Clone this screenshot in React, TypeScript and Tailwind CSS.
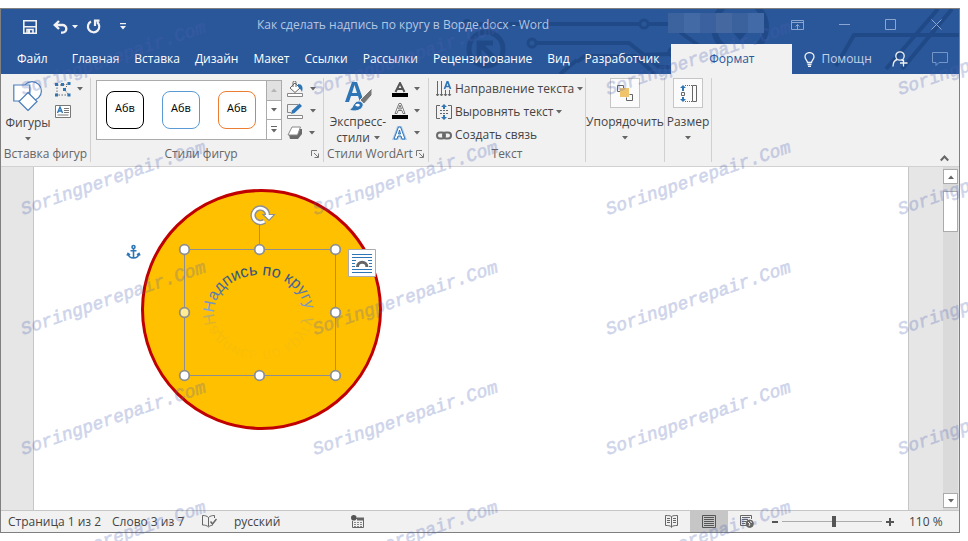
import { ReactNode, useState } from 'react';
import clsx from 'clsx';

const tabs = [
    'Главная',
    'Вставка',
    'Дизайн',
    'Макет',
    'Ссылки',
    'Рассылки',
    'Рецензирование',
    'Вид',
    'Разработчик',
];

const swatches = [
    { name: 'black', className: 'border-black' },
    { name: 'blue', className: 'border-[#5b9bd5]' },
    { name: 'orange', className: 'border-[#ed7d31]' },
];

const handles = [
    [184, 249],
    [259, 249],
    [335, 249],
    [335, 312],
    [335, 375],
    [259, 375],
    [184, 375],
];

const watermarks = [23, 315, 608, 900].flatMap((x) => [95, 215, 335, 455, 575].map((y) => ({ x, y })));

function Caret({ className = 'text-[#666]' }: { className?: string }) {
    return (
        <svg width="6" height="4" viewBox="0 0 6 4" className={clsx('shrink-0', className)} aria-hidden>
            <path d="M0 0h6L3 3.5z" fill="currentColor" />
        </svg>
    );
}

function Group({
    label,
    launcher,
    className,
    children,
}: {
    label?: string;
    launcher?: boolean;
    className: string;
    children: ReactNode;
}) {
    return (
        <section
            className={clsx('my-1 flex shrink-0 flex-col border-r border-[#d2d0d0]', className)}
            aria-label={label}
        >
            <div className="flex h-[72px]">{children}</div>
            {label && (
                <div className="flex h-4 items-center text-[#666]">
                    <span className="flex-1 whitespace-nowrap text-center leading-4">{label}</span>
                    {launcher && (
                        <button type="button" className="mr-1 shrink-0" aria-label="Параметры">
                            <svg width="8" height="8" viewBox="0 0 8 8" fill="none" stroke="#777">
                                <path d="M.5 6V.5H6M3 3l4 4M7.5 3.5v4h-4" />
                            </svg>
                        </button>
                    )}
                </div>
            )}
        </section>
    );
}

function IconButton({ label, children }: { label: string; children: ReactNode }) {
    return (
        <button type="button" aria-label={label} className="flex h-[22px] items-center gap-1.5">
            {children}
        </button>
    );
}

function Circuit() {
    return (
        <svg
            width="529"
            height="65"
            viewBox="430 9 529 65"
            className="pointer-events-none absolute top-0 right-0"
            fill="none"
            stroke="#204a87"
            strokeWidth="4"
            aria-hidden
        >
            <circle cx="467" cy="24" r="3.5" strokeWidth="3" />
            <path d="M471 24h169M536 43h93l30 24h15M577 62l8-6h50l20 18M560 74l17-14" />
            <circle cx="644" cy="24" r="4" strokeWidth="3" />
            <circle cx="532" cy="43" r="4" strokeWidth="3" />
            <path d="M648 24h40M680 32l22 16M640 55l30-1" />
            <circle cx="673" cy="52" r="4" strokeWidth="3" />
            <circle cx="486" cy="49" r="17" strokeWidth="5" />
            <path d="M479 57V43h14M480 44l14 14" strokeWidth="5" />
            <circle cx="740" cy="27" r="26" strokeWidth="6" />
            <path d="M728 22l12 14 14-18" strokeWidth="6" />
            <path d="M836 66l18-31h105M938 9l-52 60M952 9l-50 60" />
        </svg>
    );
}

function TitleBar() {
    return (
        <header className="relative flex h-[35px] text-[#b3c6e3]">
            <div className="flex w-64 shrink-0 items-center pl-[22px] text-[#f2f2f2]">
                <button type="button" aria-label="Сохранить">
                    <svg width="14" height="14" viewBox="0 0 14 14" fill="none" stroke="currentColor" strokeWidth="1.6">
                        <path d="M.8.8h12.4v12.4H.8zM1 6.8h12" />
                        <path d="M4 13V9.500h6V13" />
                        <path d="M5 9.500h2V13H5z" fill="currentColor" stroke="none" />
                    </svg>
                </button>
                <button type="button" aria-label="Отменить" className="ml-4">
                    <svg width="15" height="14" viewBox="0 0 15 14" fill="none" stroke="currentColor" strokeWidth="2.4">
                        <path d="M6 1L1.800 5 6 9M2.500 5h7a3.800 3.800 0 0 1 0 7.600H8" />
                    </svg>
                </button>
                <button type="button" aria-label="Список отмены" className="ml-1">
                    <Caret className="text-[#f2f2f2]" />
                </button>
                <button type="button" aria-label="Повторить" className="ml-2">
                    <svg width="16" height="15" viewBox="0 0 16 15" fill="none" stroke="currentColor" strokeWidth="2.200">
                        <path d="M5 2.500A5.700 5.700 0 1 0 11 3M13.500 1.600H9V7" />
                    </svg>
                </button>
                <button type="button" aria-label="Настройка панели" className="ml-[18px]">
                    <svg width="6" height="7" viewBox="0 0 6 7" fill="currentColor">
                        <path d="M0 0h6v1.200H0zM0 3h6L3 6.500z" />
                    </svg>
                </button>
            </div>
            <h1 className="flex-1 self-center whitespace-nowrap pb-1 leading-4">
                Как сделать надпись по кругу в Ворде.docx - Word
            </h1>
            <div className="mr-[27px] mb-2 flex h-5 w-24 shrink-0 self-center overflow-hidden" aria-hidden>
                <span className="flex-1 bg-[#3d639f]" />
                <span className="flex-1 bg-[#446aa6]" />
                <span className="flex-1 bg-[#3b629e]" />
                <span className="flex-1 bg-[#4568a0]" />
                <span className="flex-1 bg-[#3c629e]" />
                <span className="flex-1 bg-[#426aa7]" />
            </div>
            <div className="flex shrink-0 items-center gap-[35px] pr-[17px] pb-1 text-[#8aa6d0]">
                <button type="button" aria-label="Параметры отображения ленты">
                    <svg width="13" height="10" viewBox="0 0 13 10" fill="none" stroke="currentColor">
                        <path d="M.5.5h12v9H.5zM.5 2.500h12M6.500 9V4.500M4.500 6.500l2-2 2 2" />
                    </svg>
                </button>
                <button type="button" aria-label="Свернуть">
                    <svg width="11" height="11" viewBox="0 0 11 11" stroke="currentColor">
                        <path d="M0 5.500h11" />
                    </svg>
                </button>
                <button type="button" aria-label="Развернуть">
                    <svg width="11" height="11" viewBox="0 0 11 11" fill="none" stroke="currentColor">
                        <path d="M.5.5h10v10H.5z" />
                    </svg>
                </button>
                <button type="button" aria-label="Закрыть">
                    <svg width="11" height="11" viewBox="0 0 11 11" stroke="currentColor">
                        <path d="M.5.5l10 10M10.500.5l-10 10" />
                    </svg>
                </button>
            </div>
        </header>
    );
}

function TabBar() {
    return (
        <nav className="relative flex h-[30px] items-center whitespace-nowrap text-white">
            <button type="button" className="ml-4 mr-6">
                Файл
            </button>
            <div className="flex gap-[15px]">
                {tabs.map((tab) => (
                    <button type="button" key={tab}>
                        {tab}
                    </button>
                ))}
            </div>
            <div className="flex flex-1 items-center self-stretch">
                <button type="button" className="ml-3 h-full w-[121px] bg-[#f1f1f1] text-[#2a579a]">
                    Формат
                </button>
                <button type="button" className="ml-3 flex items-center gap-1.5 text-[#c3d1e8]">
                    <svg width="11" height="15" viewBox="0 0 11 15" fill="none" stroke="#f2f2f2" strokeWidth="1.300">
                        <path d="M3.500 10.500C3.500 8.500 1 7.500 1 4.800a4.500 4.200 0 0 1 9 0c0 2.700-2.500 3.700-2.500 5.700zM3.500 12.500h4M4 14.300h3" />
                    </svg>
                    Помощн
                </button>
            </div>
            <button type="button" aria-label="Общий доступ" className="mr-6">
                <svg width="16" height="16" viewBox="0 0 16 16" fill="none" stroke="#f2f2f2" strokeWidth="1.300">
                    <circle cx="8" cy="5" r="4.200" />
                    <path d="M1 15.500C1 11.500 3 9 5.500 8.500M9.500 8.800l1.500 1M11.500 8.500v7M8 12h7.500" />
                </svg>
            </button>
            <button type="button" aria-label="Примечания" className="mr-[11px]">
                <svg width="16" height="14" viewBox="0 0 16 14" fill="none" stroke="#7395c8">
                    <path d="M.5.5h15v10H7l-3 3v-3H.5z" />
                </svg>
            </button>
        </nav>
    );
}

function ShapesGroup() {
    return (
        <Group label="Вставка фигур" className="w-[90px]">
            <button type="button" className="flex w-[54px] flex-col items-center pt-[3px]">
                <svg width="30" height="30" viewBox="0 0 30 30" fill="#fff" stroke="#4a7ebb" strokeWidth="1.200">
                    <circle cx="19" cy="10" r="9.400" />
                    <path d="M.8 4h16v16H.8z" />
                    <path d="M15 11.500l9 9-9 9-9-9z" />
                </svg>
                <span className="mt-1 leading-4">Фигуры</span>
                <Caret className="mt-1.5 text-[#666]" />
            </button>
            <div className="flex flex-col">
                <IconButton label="Изменить фигуру">
                    <svg width="16" height="15" viewBox="0 0 16 15" fill="none">
                        <path d="M2 3h5l7-1-5 5 5 6H2z" stroke="#666" strokeDasharray="1.500 1.500" />
                        <path d="M0 1h3v3H0zM6 1h3v3H6zM12.500 0h3v3h-3zM8 6h3v3H8zM0 11.500h3v3H0zM12.500 11.500h3v3h-3z" fill="#2e75b6" />
                    </svg>
                    <Caret />
                </IconButton>
                <IconButton label="Надпись">
                    <svg width="16" height="13" viewBox="0 0 16 13" fill="none">
                        <path d="M.5.5h15v12H.5z" fill="#fff" stroke="#777" />
                        <path d="M9 3.500h5M9 5.500h5M9 7.500h5M2.500 10h11" stroke="#777" />
                        <path d="M2.500 8L5 2l2.500 6M3.500 6h3" stroke="#2e75b6" strokeWidth="1.400" />
                    </svg>
                </IconButton>
            </div>
        </Group>
    );
}

function StylesGroup() {
    const [selected, setSelected] = useState('');

    return (
        <Group label="Стили фигур" launcher className="w-[233px]">
            <div className="mt-0.5 ml-[5px] flex h-[60px] w-[186px] border border-[#ababab] bg-white">
                <div className="flex flex-1 items-center gap-[18px] pl-[9px]">
                    {swatches.map(({ name, className }) => (
                        <button
                            type="button"
                            key={name}
                            aria-pressed={selected === name}
                            onClick={() => setSelected(name)}
                            className={clsx(
                                'size-[38px] rounded-lg border pb-1 text-[11px] text-black',
                                className,
                            )}
                        >
                            Абв
                        </button>
                    ))}
                </div>
                <div className="flex w-[15px] flex-col divide-y divide-[#ababab] border-l border-[#ababab]">
                    <button type="button" aria-label="Вверх" className="grid flex-1 place-items-center bg-[#e1e1e1]">
                        <Caret className="rotate-180 text-[#b5b5b5]" />
                    </button>
                    <button type="button" aria-label="Вниз" className="grid flex-1 place-items-center">
                        <Caret />
                    </button>
                    <button
                        type="button"
                        aria-label="Дополнительно"
                        className="flex flex-1 flex-col items-center justify-center gap-0.5"
                    >
                        <span className="h-px w-1.5 bg-[#666]" />
                        <Caret />
                    </button>
                </div>
            </div>
            <div className="ml-[5px] flex flex-col">
                <IconButton label="Заливка фигуры">
                    <svg width="17" height="16" viewBox="0 0 17 16" fill="none">
                        <path d="M.5 12.500h15v3H.5z" fill="#fff" stroke="#888" />
                        <path d="M8 2l5 5-5 4.500L3 7z" fill="#fff" stroke="#666" />
                        <path d="M6 6V1.500a1.500 1.500 0 0 1 3 0V6" stroke="#666" />
                        <path d="M11 3c4 0 5.500 3 4 8-1-2-2-4-4-5z" fill="#2e75b6" />
                    </svg>
                    <Caret />
                </IconButton>
                <IconButton label="Контур фигуры">
                    <svg width="17" height="16" viewBox="0 0 17 16" fill="none">
                        <path d="M.5 12.500h15v3H.5z" fill="#fff" stroke="#888" />
                        <path d="M11 1.500H.5v8H4" stroke="#888" />
                        <path d="M4 11l1-3.500L12.500.5l2.500 2.500L7.500 10z" fill="#2e75b6" />
                    </svg>
                    <Caret />
                </IconButton>
                <IconButton label="Эффекты фигуры">
                    <svg width="16" height="14" viewBox="0 0 16 14">
                        <path d="M6 3h9v5l-4 5H3L2 9z" fill="#6a6a6a" />
                        <path d="M5 1h8.500l-3 8H1z" fill="#fff" stroke="#888" strokeLinejoin="round" />
                    </svg>
                    <Caret />
                </IconButton>
            </div>
        </Group>
    );
}

function WordArtGroup() {
    return (
        <Group label="Стили WordArt" launcher className="w-[105px]">
            <button type="button" className="flex w-[68px] flex-col items-center pt-0.5 leading-4">
                <svg width="30" height="32" viewBox="0 0 30 32" className="shrink-0">
                    <path d="M2 22L9 2h5l7 20h-4l-2-6H8l-2 6zM9 13h5l-2.500-8z" fill="#2e75b6" fillRule="evenodd" />
                    <path d="M29 8v7l-8 9-4-4z" fill="#777" stroke="#f1f1f1" />
                    <path d="M6 30c4-1 4-8 9-9 3 0 6 2 5 5-2 5-9 6-14 4z" fill="#2e75b6" stroke="#f1f1f1" />
                    <path d="M12 25c2-2 4-1 5 0-1 2-3 2-5 0z" fill="#fff" />
                </svg>
                <span className="mt-0.5">Экспресс-</span>
                <span className="flex items-center gap-1">
                    стили
                    <Caret />
                </span>
            </button>
            <div className="flex flex-col">
                <IconButton label="Заливка текста">
                    <svg width="16" height="15" viewBox="0 0 16 15">
                        <path d="M3.500 10L8 1l4.500 9M5.500 7h5" fill="none" stroke="#555" strokeWidth="2" />
                        <path d="M0 11h16v4H0z" />
                    </svg>
                    <Caret />
                </IconButton>
                <IconButton label="Контур текста">
                    <svg width="16" height="16" viewBox="0 0 16 16">
                        <path d="M3 10.500L7 .5h2l4 10h-2l-1-3H6l-1 3zM6.500 6h3L8 2z" fill="#fff" stroke="#777" />
                        <path d="M0 12h16v4H0z" />
                    </svg>
                    <Caret />
                </IconButton>
                <IconButton label="Текстовые эффекты">
                    <svg width="16" height="14" viewBox="0 0 16 14">
                        <path d="M2 13L6.500 1h2L13 13h-3l-1-3H6l-1 3zM6.500 8h2l-1-4z" fill="#fff" stroke="#a6c8ea" strokeWidth="3" />
                        <path d="M2 13L6.500 1h2L13 13h-3l-1-3H6l-1 3zM6.500 8h2l-1-4z" fill="#fff" stroke="#2e75b6" />
                    </svg>
                    <Caret />
                </IconButton>
            </div>
        </Group>
    );
}

function TextGroup() {
    return (
        <Group label="Текст" className="w-[157px]">
            <div className="ml-[7px] flex flex-col whitespace-nowrap">
                <button type="button" className="flex h-[22px] items-center gap-[3px]">
                    <svg width="16" height="16" viewBox="0 0 16 16" fill="none">
                        <path d="M1.500 0v15M5.500 0v15M9.500 9v6M13.500 9v6" stroke="#666" />
                        <path d="M0 13l1.500 2L3 13M4 13l1.500 2L7 13M8 13l1.500 2 1.500-2M12 13l1.500 2 1.500-2" stroke="#666" />
                        <path d="M8.500 8L11.500 0l3 8M9.500 5.500h4" stroke="#2e75b6" strokeWidth="1.700" />
                    </svg>
                    Направление текста
                    <Caret />
                </button>
                <button type="button" className="flex h-[24px] items-center gap-[3px]">
                    <svg width="16" height="16" viewBox="0 0 16 16" fill="none">
                        <path d="M4 1.500H.5v13H4M12 1.500h3.500v13H12" stroke="#666" />
                        <path d="M4 6.500h8M4 9.500h8" stroke="#666" strokeDasharray="2 1" />
                        <path d="M8 0l3 3H9v2H7V3H5zM8 16l-3-3h2v-2h2v2h2z" fill="#2e75b6" />
                    </svg>
                    Выровнять текст
                    <Caret />
                </button>
                <button type="button" className="flex h-[22px] items-center gap-[3px]">
                    <svg width="16" height="9" viewBox="0 0 16 9" fill="none" stroke="#6a6a6a" strokeWidth="2">
                        <rect x="1" y="1.500" width="8" height="6" rx="3" />
                        <rect x="7" y="1.500" width="8" height="6" rx="3" />
                    </svg>
                    Создать связь
                </button>
            </div>
        </Group>
    );
}

function CollapsedGroup({ label, className, children }: { label: string; className: string; children: ReactNode }) {
    return (
        <Group className={className}>
            <button type="button" className="flex w-full flex-col items-center">
                <span className="grid size-[30px] place-items-center border border-[#c6c6c6] bg-[#fbfbfb]">
                    {children}
                </span>
                <span className="mt-1 leading-5">{label}</span>
                <Caret className="mt-1 text-[#666]" />
            </button>
        </Group>
    );
}

function Ribbon() {
    return (
        <div className="flex h-[93px] border-b border-[#d2d0d0] bg-[#f1f1f1]">
            <ShapesGroup />
            <StylesGroup />
            <WordArtGroup />
            <TextGroup />
            <CollapsedGroup label="Упорядочить" className="w-[79px]">
                <svg width="16" height="16" viewBox="0 0 16 16" fill="none">
                    <path d="M3.500 6.500h-3v-6h6v3M12.500 9.500h3v6h-6v-3" stroke="#666" />
                    <path d="M3 3h9v9H3z" fill="#f0c36d" />
                </svg>
            </CollapsedGroup>
            <CollapsedGroup label="Размер" className="w-[47px]">
                <svg width="17" height="17" viewBox="0 0 17 17" fill="none">
                    <path d="M12.500.5h4v16h-4zM1.500 7.500h3v3h-3z" stroke="#666" />
                    <path d="M5 .5h7M5 16.500h7" stroke="#666" strokeDasharray="1 1" />
                    <path d="M3 0l3 3H4v3H2V3H0zM3 17l-3-3h2v-2h2v2h2z" fill="#2e75b6" />
                </svg>
            </CollapsedGroup>
            <button type="button" aria-label="Свернуть ленту" className="mr-2.5 mb-1 ml-auto self-end">
                <svg width="9" height="7" viewBox="0 0 9 7" fill="none" stroke="#666" strokeWidth="2">
                    <path d="M.8 5.500l3.700-4 3.700 4" />
                </svg>
            </button>
        </div>
    );
}

function Drawing() {
    return (
        <svg
            width="360"
            height="273"
            viewBox="34 167 360 273"
            className="block"
            fontFamily="'Liberation Sans', sans-serif"
            fontSize="16"
        >
            <defs>
                <path id="arc" d="M214 313A45.500 38 0 0 1 305 313V330" />
                <linearGradient id="ink" gradientUnits="userSpaceOnUse" x1="0" y1="262" x2="0" y2="314">
                    <stop offset="0" stopColor="#1f4068" />
                    <stop offset=".45" stopColor="#44679a" />
                    <stop offset="1" stopColor="#8fb0dc" />
                </linearGradient>
                <linearGradient id="fade" gradientUnits="userSpaceOnUse" x1="0" y1="314" x2="0" y2="262">
                    <stop offset="0" stopColor="#8fa6b0" stopOpacity=".85" />
                    <stop offset=".3" stopColor="#a89a60" stopOpacity=".12" />
                    <stop offset="1" stopColor="#a89a60" stopOpacity=".03" />
                </linearGradient>
            </defs>

            <circle cx="261.500" cy="309.500" r="119" fill="#ffc000" stroke="#c00000" strokeWidth="3" />

            <text fill="url(#ink)">
                <textPath href="#arc">Надпись по кругу</textPath>
            </text>
            <text fill="url(#fade)" transform="matrix(1 0 0 -1 0 626)" aria-hidden>
                <textPath href="#arc">Надпись по кругу</textPath>
            </text>

            <path d="M184.500 249.500h151v126h-151zM259.500 222v27" fill="none" stroke="#8f8f8f" />
            {handles.map(([x, y]) => (
                <circle key={`${x}-${y}`} cx={x + 0.5} cy={y + 0.5} r="4.800" fill="#fff" stroke="#8f8f8f" strokeWidth="1.800" />
            ))}
            <circle cx="184.500" cy="312.500" r="4.800" fill="#ffec94" stroke="#8f8f8f" strokeWidth="1.800" />

            <path d="M267.500 214a7.200 7.200 0 1 0-3 7.200" fill="none" stroke="#8f8f8f" strokeWidth="5.500" />
            <path d="M263 214.500h11.500l-5.500 6z" fill="#fff" stroke="#8f8f8f" strokeWidth="1.200" />
            <path d="M267.500 215a7.200 7.200 0 1 0-3 6.200" fill="none" stroke="#fff" strokeWidth="2.600" />

            <g fill="none" stroke="#2e75b6" strokeWidth="1.600">
                <circle cx="133.500" cy="247" r="1.500" />
                <path d="M133.500 249v9M130.500 250.800h6M128 253.500c.5 3 2.500 4.500 5.500 4.500s5-1.500 5.500-4.500M127 255.500l1-2 2 1.500M140 255.500l-1-2-2 1.500" />
            </g>

            <path d="M348.500 249.500h27v27h-27z" fill="#fff" stroke="#ababab" />
            <path d="M352 254.500h20M352 257.500h20M352 260.500h4M368 260.500h4M352 263.500h3M369 263.500h3M352 266.500h3M369 266.500h3M352 269.500h20M352 272.500h20" stroke="#2e75b6" />
            <path d="M357.500 267a4.700 4.700 0 0 1 9.400 0" fill="none" stroke="#666" strokeWidth="3" />
        </svg>
    );
}

function Workspace() {
    return (
        <main className="flex flex-1 bg-[#e6e6e6] pr-px">
            <div className="ml-8 flex-1 border-x border-[#c6c6c6] bg-white">
                <Drawing />
            </div>
            <div className="ml-[34px] flex w-[15px] flex-col bg-[#dadada] pt-0.5 pb-0.5" aria-hidden>
                <div className="grid size-[15px] place-items-center border border-[#ababab] bg-white">
                    <Caret className="rotate-180 text-[#666]" />
                </div>
                <div className="mt-[7px] h-[41px] border border-[#ababab] bg-white" />
                <div className="mt-auto grid size-[15px] place-items-center border border-[#ababab] bg-white">
                    <Caret />
                </div>
            </div>
        </main>
    );
}

function StatusBar() {
    const [zoom, setZoom] = useState(52);

    return (
        <footer className="flex h-[22px] items-center whitespace-nowrap border-t border-[#c6c6c6] bg-[#f1f1f1] pl-[7px]">
            <span className="w-[104px]">Страница 1 из 2</span>
            <span className="w-[90px]">Слово 3 из 7</span>
            <button type="button" aria-label="Правописание" className="w-8">
                <svg width="15" height="13" viewBox="0 0 15 13" fill="none" stroke="#666">
                    <path d="M6.500 2.500v9M6.500 2.500C5 1 3 .5.5.5v9.500c2.500 0 4.500.5 6 2 1-1 2-1.500 4-1.700M6.500 2.500C8 1 10 .5 12.500.5V3" />
                    <path d="M8.500 6.500l2 2.500 4-5" strokeWidth="1.500" />
                </svg>
            </button>
            <span className="w-[117px]">русский</span>
            <button type="button" aria-label="Запись макроса">
                <svg width="13" height="13" viewBox="0 0 13 13" fill="none">
                    <path d="M5 3.500h7.500v9h-11V6" stroke="#666" />
                    <path d="M6 2.500h7v3H6z" fill="#666" />
                    <path d="M3 7.500h8M3 9.500h8M3 11.500h8" stroke="#888" strokeDasharray="2 1" />
                    <circle cx="2.800" cy="2.800" r="2.800" fill="#555" />
                </svg>
            </button>
            <div className="ml-auto flex items-center self-stretch">
                <button type="button" aria-label="Режим чтения" className="grid h-full w-[38px] place-items-center">
                    <svg width="13" height="13" viewBox="0 0 13 13" fill="none" stroke="#666">
                        <path d="M6.500 1.500C5 .5 3 .5.500.5v10c2.500 0 4.500 0 6 1.500 1.500-1.500 3.500-1.500 6-1.500V.5c-2.500 0-4.500 0-6 1zv11M2 3.500h3M2 5.500h3M2 7.500h3M8 3.500h3M8 5.500h3M8 7.500h3" />
                    </svg>
                </button>
                <button type="button" aria-label="Разметка страницы" className="grid h-full w-[38px] place-items-center bg-[#c6c6c6]">
                    <svg width="14" height="13" viewBox="0 0 14 13" fill="none" stroke="#555">
                        <path d="M.5.5h13v12H.5zM2 2.500h10M2 4.500h10M2 6.500h10M2 8.500h10M2 10.500h10" />
                    </svg>
                </button>
                <button type="button" aria-label="Веб-документ" className="grid h-full w-[38px] place-items-center">
                    <svg width="14" height="13" viewBox="0 0 14 13" fill="none" stroke="#666">
                        <path d="M6 10.500H.5V.5h11V4M2 2.500h8M2 4.500h6M2 6.500h4M2 8.500h3" />
                        <circle cx="9.700" cy="8.700" r="3.700" fill="#666" />
                        <path d="M8 7l2 2-1 2M10.500 6l1 2" stroke="#f1f1f1" />
                    </svg>
                </button>
                <button type="button" aria-label="Уменьшить" className="ml-1.5 h-0.5 w-1.5 bg-[#555]" />
                <input
                    type="range"
                    aria-label="Масштаб"
                    value={zoom}
                    onChange={(e) => setZoom(Number(e.target.value))}
                    className="mx-1 h-3 w-[100px] appearance-none bg-transparent bg-[linear-gradient(#ababab,#ababab)] bg-[length:100%_1px] bg-center bg-no-repeat [&::-webkit-slider-thumb]:h-[11px] [&::-webkit-slider-thumb]:w-1 [&::-webkit-slider-thumb]:appearance-none [&::-webkit-slider-thumb]:bg-[#555]"
                />
                <button type="button" aria-label="Увеличить">
                    <svg width="8" height="8" viewBox="0 0 8 8" stroke="#555" strokeWidth="2">
                        <path d="M0 4h8M4 0v8" />
                    </svg>
                </button>
                <output className="ml-[15px] w-[50px]">110 %</output>
            </div>
        </footer>
    );
}

function Watermark() {
    return (
        <svg
            className="pointer-events-none absolute inset-0 h-full w-full"
            fontFamily="'Liberation Mono', monospace"
            fontSize="18"
            fontStyle="italic"
            fill="#4c62b4"
            stroke="#4c62b4"
            strokeWidth=".6"
            opacity=".27"
            aria-hidden
        >
            {watermarks.map(({ x, y }) => (
                <text key={`${x}-${y}`} transform={`translate(${x} ${y}) rotate(-19)`}>
                    Soringperepair.Com
                </text>
            ))}
        </svg>
    );
}

export default function App() {
    return (
        <div className="relative flex min-h-screen flex-col overflow-hidden bg-white pt-2 pr-2 pb-2 font-['Open_Sans','Noto_Sans',sans-serif] text-[12px] text-[#444]">
            <div className="flex flex-1 flex-col border border-[#808080]">
                <div className="relative bg-[#2a579a]">
                    <Circuit />
                    <TitleBar />
                    <TabBar />
                </div>
                <Ribbon />
                <Workspace />
                <StatusBar />
            </div>
            <Watermark />
        </div>
    );
}
